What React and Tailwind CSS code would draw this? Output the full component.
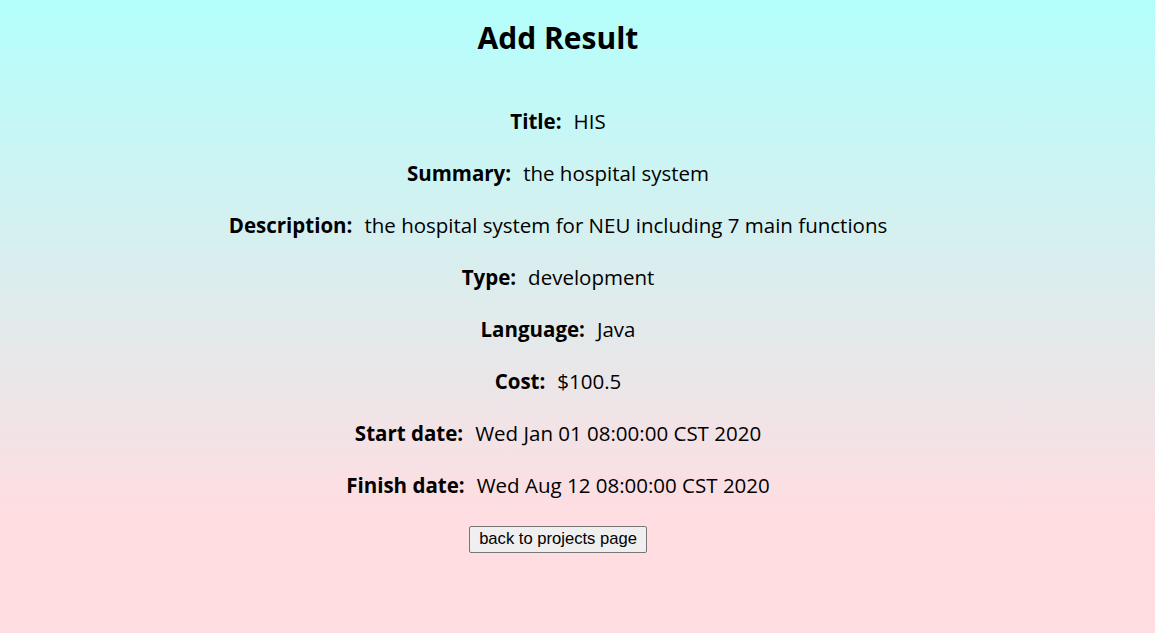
import React from 'react'

const rows = [
  ['Title:', 'HIS'],
  ['Summary:', 'the hospital system'],
  ['Description:', 'the hospital system for NEU including 7 main functions'],
  ['Type:', 'development'],
  ['Language:', 'Java'],
  ['Cost:', '$100.5'],
  ['Start date:', 'Wed Jan 01 08:00:00 CST 2020'],
  ['Finish date:', 'Wed Aug 12 08:00:00 CST 2020'],
]

export default function App(){
  return (
    <div className="min-h-[633px] w-full bg-[linear-gradient(to_bottom,#b3fffc_0%,#ffdde1_82%,#ffdde1_100%)] text-black font-['Open_Sans','Noto_Sans',sans-serif]">
      <div className="flex flex-col items-center pt-[18px] pr-[39px]">
        <h1 className="text-[30px] leading-[40px] font-bold">Add Result</h1>
        <div className="mt-[37px] flex flex-col items-center">
          {rows.map(([label, value]) => (
            <p key={label} className="text-[20.5px] leading-[52px]">
              <span className="font-bold mr-[12px]">{label}</span>
              <span>{value}</span>
            </p>
          ))}
        </div>
        <button className="mt-[15px] h-[27px] px-[9px] bg-[#efefef] border border-[#767676] rounded-[2px] text-[16.6px] font-['Liberation_Sans',Arial,sans-serif]">
          back to projects page
        </button>
      </div>
    </div>
  )
}
